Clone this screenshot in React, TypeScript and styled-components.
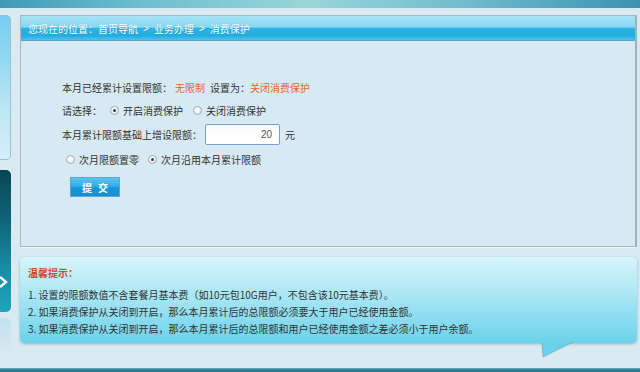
import React from "react";
import styled, { createGlobalStyle } from "styled-components";

const Global = createGlobalStyle`
  html, body { margin: 0; padding: 0; }
  body {
    background: #d9eaf3;
    font-family: "Noto Sans CJK SC", "Liberation Sans", sans-serif;
    font-size: 10px;
    color: #333;
  }
`;

const Page = styled.div`
  width: 640px;
  height: 372px;
  display: flex;
  flex-direction: column;
  overflow: hidden;
  background: #d9eaf3;
`;

const TopBar = styled.div`
  height: 8px;
  flex: none;
  background: linear-gradient(90deg, #3f9bb7 0%, #6cbecf 22%, #98d6d9 48%, #72bccd 72%, #3b93b2 100%);
`;

const BottomBar = styled.div`
  height: 4px;
  flex: none;
  background: linear-gradient(180deg, #7cb6c6 0%, #2f8096 40%, #27768c 100%);
`;

const Body = styled.div`
  flex: 1;
  min-height: 0;
  display: flex;
  gap: 9px;
  padding-top: 7px;
`;

const Side = styled.div`
  width: 11px;
  flex: none;
  display: flex;
  flex-direction: column;
`;

const SideTop = styled.div`
  height: 145px;
  box-sizing: border-box;
  border: 1px solid #9cbfcd;
  border-left: none;
  border-radius: 0 5px 5px 0;
  background: linear-gradient(180deg, #78cdef 0%, #93d9f3 30%, #bde6f5 65%, #d6eef8 100%);
`;

const SideDark = styled.div`
  height: 142px;
  margin-top: 10px;
  border-radius: 0 5px 5px 0;
  background: linear-gradient(180deg, #0b4557 0%, #0f6478 35%, #168ea4 70%, #1fa5bb 100%);
  display: flex;
  align-items: flex-end;
  padding-bottom: 24px;
  box-sizing: border-box;
`;

const SideFade = styled.div`
  height: 38px;
  margin-top: 6px;
  border-radius: 0 5px 0 0;
  background: linear-gradient(180deg, #bfe1ed 0%, #d9eaf3 100%);
`;

const Main = styled.div`
  width: 617px;
  flex: none;
  display: flex;
  flex-direction: column;
`;

const Panel = styled.div`
  height: 232px;
  box-sizing: border-box;
  border: 1px solid #a8b7bd;
  border-right: 2px solid #9fb1b9;
  background: #d7eaf3;
  box-shadow: 0 1px 0 #e9f4f9;
  display: flex;
  flex-direction: column;
`;

const PanelHeader = styled.div`
  height: 25px;
  flex: none;
  box-sizing: border-box;
  border-bottom: 1px solid #58a6c4;
  background: linear-gradient(180deg, #a6e3f7 0%, #88d8f3 46%, #2cb3e3 52%, #22ade0 82%, #4fc2ea 100%);
  color: #fff;
  display: flex;
  align-items: center;
  padding-left: 7px;
  font-size: 10px;
  text-shadow: 0 0 1px rgba(20, 110, 150, 0.5);
`;

const Sep = styled.span`
  padding: 0 5px;
  font-family: "Liberation Sans", sans-serif;
`;

const Form = styled.div`
  padding: 35px 0 0 41px;
  display: flex;
  flex-direction: column;
  align-items: flex-start;
`;

const Row = styled.div<{ $h: number; $indent?: number }>`
  height: ${(p) => p.$h}px;
  display: flex;
  align-items: center;
  padding-left: ${(p) => p.$indent ?? 0}px;
  white-space: nowrap;
`;

const Highlight = styled.span<{ $ml?: number }>`
  color: #ea6420;
  margin-left: ${(p) => p.$ml ?? 0}px;
`;

const Text = styled.span<{ $ml?: number }>`
  margin-left: ${(p) => p.$ml ?? 0}px;
`;

const Option = styled.label<{ $ml?: number }>`
  display: inline-flex;
  align-items: center;
  gap: 4px;
  margin-left: ${(p) => p.$ml ?? 0}px;
`;

const Radio = styled.span<{ $on?: boolean }>`
  width: 9px;
  height: 9px;
  box-sizing: border-box;
  border-radius: 50%;
  border: 1px solid #a3adb3;
  background: radial-gradient(circle at 40% 35%, #ffffff 0%, #eef1f3 50%, #d3d9dd 100%);
  display: inline-flex;
  align-items: center;
  justify-content: center;
  &::after {
    content: "";
    width: 3px;
    height: 3px;
    border-radius: 50%;
    background: ${(p) => (p.$on ? "#3a3f44" : "transparent")};
  }
`;

const Input = styled.div`
  width: 75px;
  height: 21px;
  margin-left: 3px;
  box-sizing: border-box;
  border: 1px solid #7c9fcf;
  border-radius: 2px;
  background: linear-gradient(180deg, #f4f6f8 0%, #ffffff 40%);
  display: flex;
  align-items: center;
  justify-content: flex-end;
  padding-right: 7px;
  font-family: "Liberation Sans", sans-serif;
  font-size: 10px;
  color: #555;
`;

const Button = styled.div`
  width: 50px;
  height: 20px;
  margin: 5px 0 0 8px;
  box-sizing: border-box;
  border: 1px solid #5aa9d3;
  background: linear-gradient(180deg, #5cc3ef 0%, #34aee8 45%, #1495d9 55%, #1a8fcf 100%);
  color: #fff;
  font-weight: bold;
  font-size: 10px;
  letter-spacing: 6px;
  display: flex;
  align-items: center;
  justify-content: center;
  padding-left: 6px;
`;

const Tip = styled.div`
  position: relative;
  margin-top: 10px;
  height: 86px;
  box-sizing: border-box;
  border-radius: 5px;
  padding: 8px 8px 0 8px;
  background: linear-gradient(180deg, #d6f5fb 0%, #a9e6f4 45%, #6bd2ea 100%);
  box-shadow: 0 1px 3px rgba(20, 80, 110, 0.35);
`;

const TipTail = styled.svg`
  position: absolute;
  left: 522px;
  top: 85px;
  overflow: visible;
`;

const TipTitle = styled.div`
  height: 16px;
  line-height: 16px;
  color: #d8452c;
  font-weight: bold;
  font-size: 10px;
`;

const TipList = styled.div`
  margin-top: 5px;
  display: flex;
  flex-direction: column;
`;

const TipLine = styled.div`
  height: 17px;
  line-height: 17px;
  color: #333;
  white-space: nowrap;
`;

export default function App() {
  return (
    <Page>
      <Global />
      <TopBar />
      <Body>
        <Side>
          <SideTop />
          <SideDark>
            <svg width="8" height="12" viewBox="0 0 8 12">
              <path d="M0 1 L6 6 L0 11" fill="none" stroke="#ffffff" strokeWidth="2.4" />
            </svg>
          </SideDark>
          <SideFade />
        </Side>
        <Main>
          <Panel>
            <PanelHeader>
              您现在的位置：首页导航<Sep>&gt;</Sep>业务办理<Sep>&gt;</Sep>消费保护
            </PanelHeader>
            <Form>
              <Row $h={23}>
                <Text>本月已经累计设置限额：</Text>
                <Highlight $ml={3}>无限制</Highlight>
                <Text $ml={5}>设置为：</Text>
                <Highlight>关闭消费保护</Highlight>
              </Row>
              <Row $h={23}>
                <Text>请选择：</Text>
                <Option $ml={8}>
                  <Radio $on />
                  开启消费保护
                </Option>
                <Option $ml={10}>
                  <Radio />
                  关闭消费保护
                </Option>
              </Row>
              <Row $h={25}>
                <Text>本月累计限额基础上增设限额：</Text>
                <Input>20</Input>
                <Text $ml={5}>元</Text>
              </Row>
              <Row $h={25} $indent={4}>
                <Option>
                  <Radio />
                  次月限额置零
                </Option>
                <Option $ml={9}>
                  <Radio $on />
                  次月沿用本月累计限额
                </Option>
              </Row>
              <Button>提交</Button>
            </Form>
          </Panel>
          <Tip>
            <TipTitle>温馨提示：</TipTitle>
            <TipList>
              <TipLine>1. 设置的限额数值不含套餐月基本费（如10元包10G用户，不包含该10元基本费）。</TipLine>
              <TipLine>2. 如果消费保护从关闭到开启，那么本月累计后的总限额必须要大于用户已经使用金额。</TipLine>
              <TipLine>3. 如果消费保护从关闭到开启，那么本月累计后的总限额和用户已经使用金额之差必须小于用户余额。</TipLine>
            </TipList>
            <TipTail width="32" height="16" viewBox="0 0 32 16">
              <path d="M0 0 L31 0 L1 15 Z" fill="#6bd2ea" />
              <path d="M0 1 L1 15 L31 0" fill="none" stroke="rgba(20,80,110,0.25)" strokeWidth="1" />
            </TipTail>
          </Tip>
        </Main>
      </Body>
      <BottomBar />
    </Page>
  );
}
